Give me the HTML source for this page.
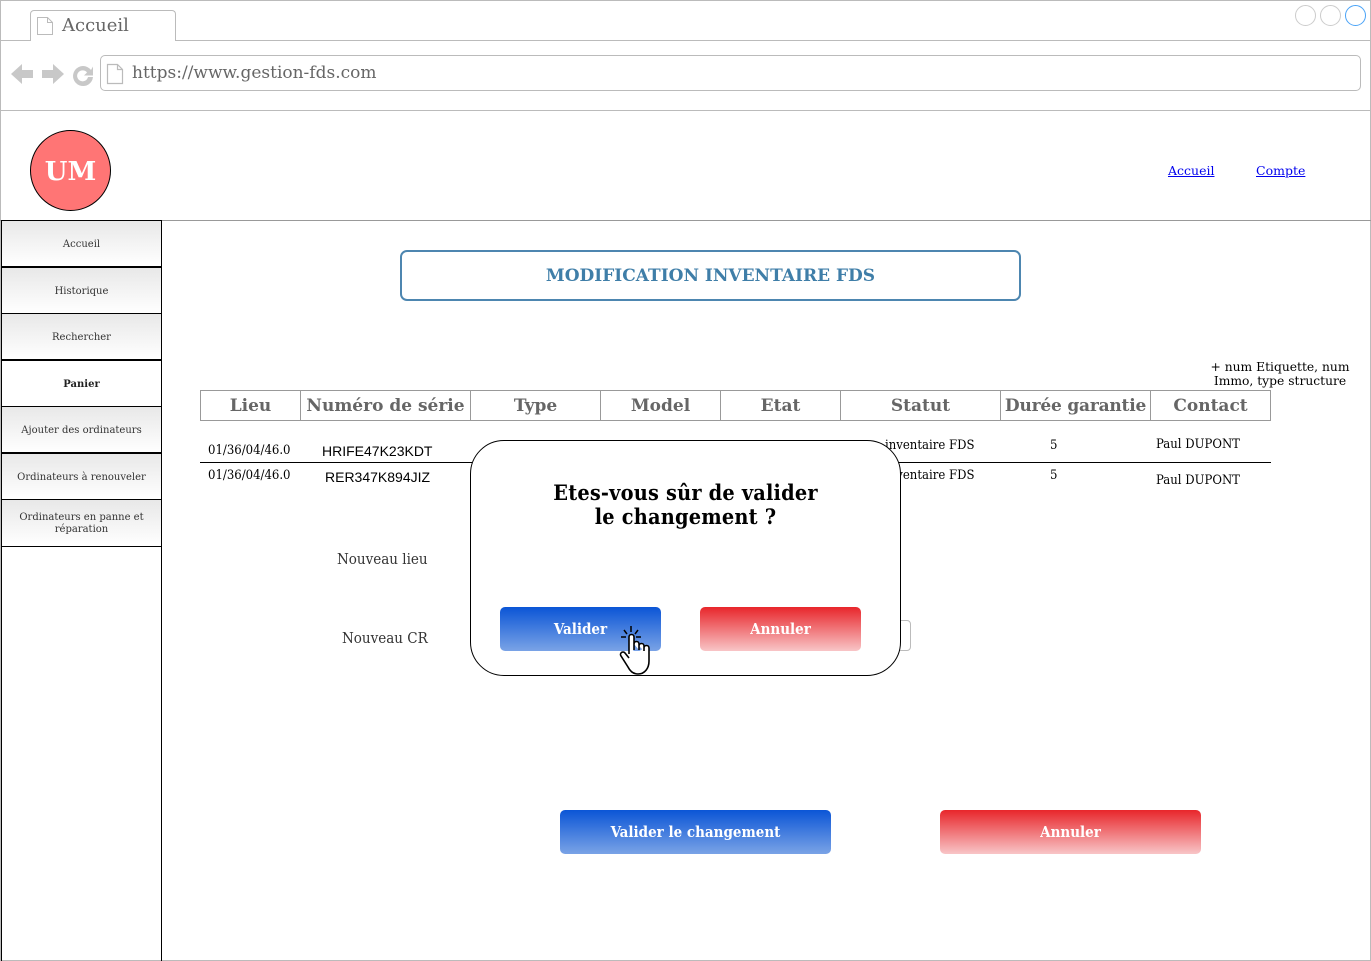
<!DOCTYPE html>
<html><head><meta charset="utf-8">
<style>
*{box-sizing:border-box;margin:0;padding:0}
body{width:1371px;height:961px;position:relative;background:#fff;font-family:"DejaVu Serif","Liberation Serif",serif;overflow:hidden}
.a{position:absolute}
.nav div{position:absolute;left:1px;width:161px;border:1px solid #000;background:linear-gradient(#e8e8e8,#fff);font-size:10px;color:#333;text-align:center;display:flex;align-items:center;justify-content:center;line-height:12px;padding-top:2px}
.hd{position:absolute;top:390px;height:31px;border:1px solid #999;color:#666;font-weight:bold;font-size:17px;text-align:center;line-height:31px}
.t{position:absolute;font-size:13px;color:#000;font-stretch:condensed}
.btn{position:absolute;border-radius:5px;color:#fff;font-weight:bold;font-size:15px;text-align:center;font-stretch:condensed}
.blue{background:linear-gradient(#0b55d6,#7aa3e6)}
.red{background:linear-gradient(#e8262b,#f8c5c7)}
</style></head><body>
<div class="a" style="left:0;top:0;width:1371px;height:961px;border:1px solid #bbb"></div>
<div class="a" style="left:0;top:40px;width:1371px;height:1px;background:#bbb"></div>
<div class="a" style="left:30px;top:10px;width:146px;height:31px;border:1px solid #bbb;border-bottom:none;border-radius:4px 4px 0 0;background:#fff"></div>
<svg class="a" style="left:36px;top:16px" width="18" height="20"><path d="M1.5 1.5h10l5 5v12h-15z M11.5 1.5v5h5" fill="none" stroke="#bbb" stroke-width="1"/></svg>
<div class="a" style="left:62px;top:15px;font-size:18px;color:#666">Accueil</div>
<div class="a" style="left:1295px;top:5px;width:21px;height:21px;border:1px solid #ccc;border-radius:50%"></div>
<div class="a" style="left:1320px;top:5px;width:21px;height:21px;border:1px solid #ccc;border-radius:50%"></div>
<div class="a" style="left:1345px;top:5px;width:21px;height:21px;border:1px solid #4aa3f7;border-radius:50%"></div>
<svg class="a" style="left:10px;top:60px" width="86" height="28">
<path d="M1 14l11-10v6h11v8h-11v6z" fill="#c8c8c8"/>
<path d="M54 14l-11-10v6h-11v8h11v6z" fill="#c8c8c8"/>
<path d="M81 10a10 10 0 1 0 2 7h-5a5.5 5.5 0 1 1-1-4.5l-3 3h9v-9z" fill="#c8c8c8"/>
</svg>
<div class="a" style="left:100px;top:55px;width:1261px;height:36px;border:1px solid #bbb;border-radius:5px"></div>
<svg class="a" style="left:106px;top:63px" width="18" height="22"><path d="M1.5 1.5h10l5 5v14h-15z M11.5 1.5v5h5" fill="none" stroke="#bbb" stroke-width="1.2"/></svg>
<div class="a" style="left:132px;top:63px;font-size:17px;color:#666">https://www.gestion-fds.com</div>
<div class="a" style="left:0;top:110px;width:1371px;height:1px;background:#bbb"></div>
<div class="a" style="left:30px;top:130px;width:81px;height:81px;border-radius:50%;background:#ff7575;border:1px solid #000;color:#fff;font-weight:bold;font-size:26px;text-align:center;line-height:82px">UM</div>
<a class="a" style="left:1168px;top:163px;font-size:12.5px;color:#00e;text-decoration:underline">Accueil</a>
<a class="a" style="left:1256px;top:163px;font-size:12.5px;color:#00e;text-decoration:underline">Compte</a>
<div class="a" style="left:0;top:220px;width:1371px;height:1px;background:#999"></div>
<div class="a" style="left:1px;top:220px;width:161px;height:741px;border:1px solid #000;border-bottom:none"></div>
<div class="nav">
<div style="top:220px;height:47px">Accueil</div>
<div style="top:267px;height:47px">Historique</div>
<div style="top:313px;height:47px">Rechercher</div>
<div style="top:360px;height:47px;background:#fff;font-weight:bold;color:#222">Panier</div>
<div style="top:406px;height:47px">Ajouter des ordinateurs</div>
<div style="top:453px;height:47px">Ordinateurs à renouveler</div>
<div style="top:499px;height:48px">Ordinateurs en panne et<br>réparation</div>
</div>
<div class="a" style="left:400px;top:250px;width:621px;height:51px;border:2px solid #4d86b0;border-radius:7px;color:#3f7ea8;font-weight:bold;font-size:17px;text-align:center;line-height:49px">MODIFICATION INVENTAIRE FDS</div>
<div class="a" style="left:1205px;top:360px;width:150px;font-size:12.3px;line-height:14px;text-align:center">+ num Etiquette, num Immo, type structure</div>
<div class="hd" style="left:200px;width:101px">Lieu</div>
<div class="hd" style="left:300px;width:171px">Numéro de série</div>
<div class="hd" style="left:470px;width:131px">Type</div>
<div class="hd" style="left:600px;width:121px">Model</div>
<div class="hd" style="left:720px;width:121px">Etat</div>
<div class="hd" style="left:840px;width:161px">Statut</div>
<div class="hd" style="left:1000px;width:151px;letter-spacing:-0.2px">Durée garantie</div>
<div class="hd" style="left:1150px;width:121px">Contact</div>
<div class="t" style="left:208px;top:443px">01/36/04/46.0</div>
<div class="t" style="left:322px;top:443px;font-family:'Liberation Sans',sans-serif;font-size:14px">HRIFE47K23KDT</div>
<div class="t" style="left:885px;top:438px">inventaire FDS</div>
<div class="t" style="left:1050px;top:438px">5</div>
<div class="t" style="left:1156px;top:437px">Paul DUPONT</div>
<div class="a" style="left:200px;top:462px;width:1071px;height:1px;background:#000"></div>
<div class="t" style="left:208px;top:468px">01/36/04/46.0</div>
<div class="t" style="left:325px;top:469px;font-family:'Liberation Sans',sans-serif;font-size:14px">RER347K894JIZ</div>
<div class="t" style="left:885px;top:468px">inventaire FDS</div>
<div class="t" style="left:1050px;top:468px">5</div>
<div class="t" style="left:1156px;top:473px">Paul DUPONT</div>
<div class="t" style="left:337px;top:550px;font-size:15px;color:#333">Nouveau lieu</div>
<div class="t" style="left:342px;top:629px;font-size:15px;color:#333">Nouveau CR</div>
<div class="a" style="left:880px;top:620px;width:31px;height:31px;border:1px solid #bbb;border-radius:4px"></div>
<div class="btn blue" style="left:560px;top:810px;width:271px;height:44px;line-height:44px">Valider le changement</div>
<div class="btn red" style="left:940px;top:810px;width:261px;height:44px;line-height:44px">Annuler</div>
<div class="a" style="left:470px;top:440px;width:431px;height:236px;border:1px solid #000;border-radius:34px;background:#fff"></div>
<div class="a" style="left:470px;top:482px;width:431px;text-align:center;font-weight:bold;font-size:21.5px;line-height:24px;font-stretch:condensed;letter-spacing:0.2px">Etes-vous sûr de valider<br>le changement ?</div>
<div class="btn blue" style="left:500px;top:607px;width:161px;height:44px;line-height:44px">Valider</div>
<div class="btn red" style="left:700px;top:607px;width:161px;height:44px;line-height:44px">Annuler</div>
<svg class="a" style="left:615px;top:624px" width="42" height="54" viewBox="0 0 42 54">
<path d="M16 2v6M9 6l3 4M23 6l-3 4M6 13h5M26 13h-5" stroke="#000" stroke-width="1.5"/>
<path d="M14 30V13a2.5 2.5 0 0 1 5 0v13 M19 20a2.5 2.5 0 0 1 5 0v6 M24 22a2.5 2.5 0 0 1 5 0v5 M29 24a2.5 2.5 0 0 1 5 0v13c0 7-4 13-11 13c-5 0-8-3-10-7l-7-11a2.5 2.5 0 0 1 4-3l4 5" fill="#fff" stroke="#000" stroke-width="1.6"/>
</svg>
</body></html>
